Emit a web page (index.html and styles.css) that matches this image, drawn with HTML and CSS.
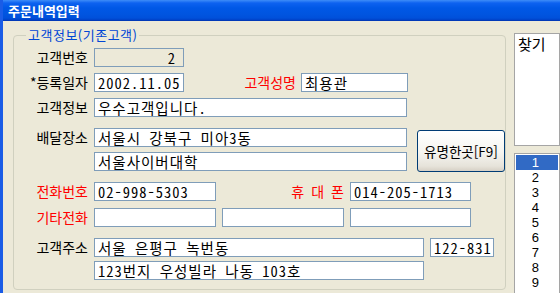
FILE: index.html
```html
<!DOCTYPE html>
<html lang="ko">
<head>
  <meta charset="UTF-8" />
  <title>주문내역입력</title>
  <link rel="stylesheet" href="styles.css">
</head>
<body>
  <div class="window">
    <div class="titlebar">주문내역입력</div>

    <div class="body">
      <fieldset class="group">
        <legend>고객정보(기존고객)</legend>

        <div class="row">
          <span class="label">고객번호</span>
          <div class="field w90 readonly">2</div>
        </div>

        <div class="row gap-m">
          <span class="label">*등록일자</span>
          <div class="field w90">2002.11.05</div>
          <span class="label red mid">고객성명</span>
          <div class="field w107">최용관</div>
        </div>

        <div class="row gap-m">
          <span class="label">고객정보</span>
          <div class="field w313">우수고객입니다.</div>
        </div>

        <div class="row top gap-l">
          <span class="label">배달장소</span>
          <div class="stack wide-gap">
            <div class="field w313">서울시 강북구 미아3동</div>
            <div class="field w313">서울사이버대학</div>
          </div>
          <button class="btn">유명한곳[F9]</button>
        </div>

        <div class="row gap-ml">
          <span class="label red">전화번호</span>
          <div class="field w122">02-998-5303</div>
          <span class="label red mid2"><span class="spread">휴대폰</span></span>
          <div class="field w121">014-205-1713</div>
        </div>

        <div class="row gap-s2">
          <span class="label red">기타전화</span>
          <div class="field w122"></div>
          <div class="field w122 next"></div>
          <div class="field w121 next"></div>
        </div>

        <div class="row top gap-l">
          <span class="label">고객주소</span>
          <div class="stack">
            <div class="line">
              <div class="field w330">서울 은평구 녹번동</div>
              <div class="field w64 next">122-831</div>
            </div>
            <div class="field w330">123번지 우성빌라 나동 103호</div>
          </div>
        </div>
      </fieldset>

      <div class="side">
        <div class="box find">찾기</div>
        <ul class="box list">
          <li class="sel"><span>1</span></li>
          <li><span>2</span></li>
          <li><span>3</span></li>
          <li><span>4</span></li>
          <li><span>5</span></li>
          <li><span>6</span></li>
          <li><span>7</span></li>
          <li><span>8</span></li>
          <li><span>9</span></li>
        </ul>
      </div>
    </div>
  </div>
</body>
</html>
```

FILE: styles.css
```css
body {
  margin: 0;
  background: #ECE9D8;
  font-family: "Noto Sans CJK KR", sans-serif;
  font-size: 13px;
  color: #000;
  overflow: hidden;
}

.window {
  width: 560px;
  height: 293px;
  border-left: 3px solid #1A5CE6;
  box-sizing: border-box;
  overflow: hidden;
}

.titlebar {
  height: 21px;
  line-height: 21px;
  padding-left: 5px;
  color: #fff;
  font-weight: bold;
  font-size: 13px;
  background: linear-gradient(to bottom, #3E8DF8 0px, #0D62F0 3px, #0058E6 8px, #0055E0 14px, #0050DA 18px, #0041C8 20px, #0031A8 21px);
}

.body {
  display: flex;
  align-items: flex-start;
}

/* group box */
.group {
  margin: 7px 0 0 10px;
  padding: 6px 0 9px 0;
  width: 506px;
  box-sizing: border-box;
  border: 1px solid #D0D0BF;
  border-radius: 4px;
}

.group legend {
  margin-left: 12px;
  padding: 0 2px;
  color: #0046D5;
  font-size: 13px;
  line-height: 14px;
  letter-spacing: 0.5px;
}

.row {
  display: flex;
  align-items: center;
}

.row.top { align-items: flex-start; }

.gap-m { margin-top: 6px; }
.gap-s2 { margin-top: 7px; }
.gap-ml { margin-top: 10px; }
.gap-l { margin-top: 11px; }

.label {
  width: 74px;
  margin-right: 6px;
  text-align: right;
  font-size: 14px;
  line-height: 19px;
  white-space: nowrap;
}

.label.mid { width: 112px; margin-right: 5px; }
.label.mid2 { width: 128px; margin-right: 6px; }

.red { color: #FF0000; }

.spread {
  letter-spacing: 7px;
  margin-right: -7px;
}

.field {
  height: 19px;
  box-sizing: border-box;
  border: 1px solid #7F9DB9;
  background: #fff;
  padding: 0 3px;
  font-family: "Noto Sans Mono CJK KR", "Noto Sans CJK KR", monospace;
  font-size: 14.5px;
  letter-spacing: 1px;
  line-height: 17px;
  white-space: nowrap;
  overflow: hidden;
}

.field.readonly {
  background: #ECE9D8;
  text-align: right;
  padding-right: 7px;
}

.field.next { margin-left: 6px; }

.w64 { width: 64px; }
.w90 { width: 90px; }
.w107 { width: 107px; }
.w121 { width: 121px; }
.w122 { width: 122px; }
.w313 { width: 313px; }
.w330 { width: 330px; }

.stack {
  display: flex;
  flex-direction: column;
  gap: 4px;
}

.stack.wide-gap { gap: 5px; }

.line { display: flex; }

.btn {
  margin: 2px 0 0 10px;
  width: 88px;
  height: 42px;
  padding: 0;
  border: 1px solid #003C74;
  border-radius: 3px;
  background: linear-gradient(to bottom, #FFFFFF 0%, #F5F4EF 55%, #E6E3DA 88%, #D6D0C5 100%);
  font-family: "Noto Sans CJK KR", sans-serif;
  font-size: 13.5px;
  color: #000;
}

/* right side panel */
.side {
  margin-left: 8px;
  width: 100px;
  display: flex;
  flex-direction: column;
}

.box {
  border: 1px solid #A5A5A5;
  background: #fff;
  box-sizing: border-box;
}

.find {
  margin-top: 12px;
  height: 113px;
  padding: 2px 3px;
  font-size: 15px;
  line-height: 16px;
}

.list {
  margin: 7px 0 0;
  padding: 1px;
  height: 150px;
  list-style: none;
  font-family: "Liberation Sans", sans-serif;
  font-size: 13px;
}

.list li {
  height: 15px;
  line-height: 15px;
}

.list li span {
  display: inline-block;
  width: 23px;
  text-align: right;
}

.list li.sel {
  background: #316AC5;
  color: #fff;
}
```
